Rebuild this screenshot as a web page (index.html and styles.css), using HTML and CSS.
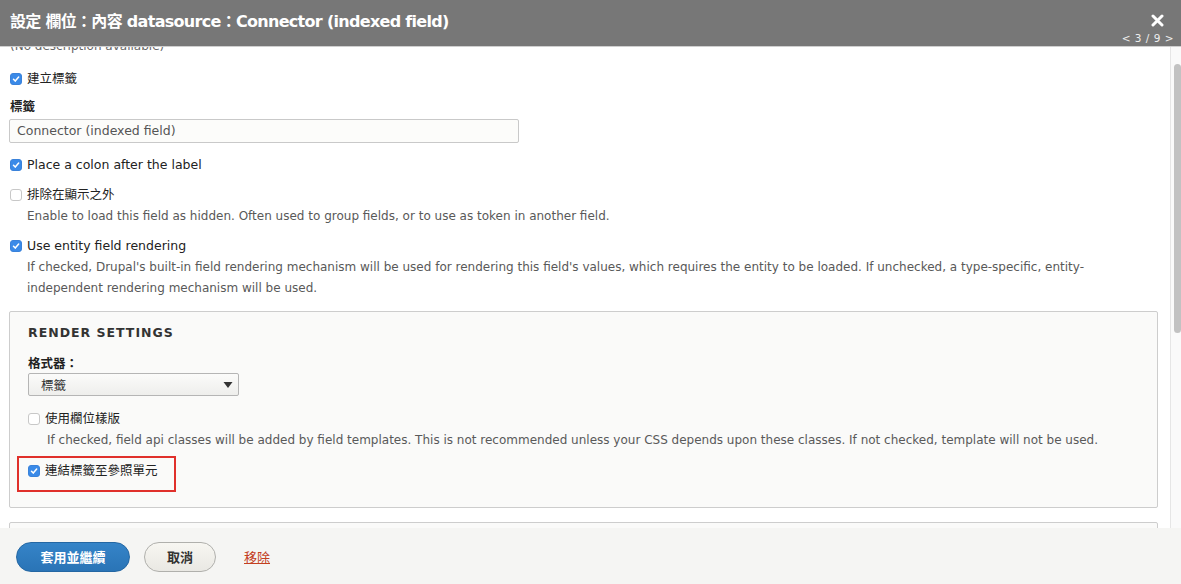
FILE: index.html
```html
<!DOCTYPE html>
<html lang="zh-Hant">
<head>
<meta charset="utf-8">
<title>設定 欄位</title>
<link rel="stylesheet" href="styles.css">
</head>
<body>
<div class="dialog">
  <header class="titlebar">
    <h1 class="title">設定 欄位：內容 datasource：Connector (indexed field)</h1>
    <div class="title-tools">
      <span class="close" aria-label="close">
        <svg width="13" height="13" viewBox="0 0 13 13"><path d="M2 2 L11 11 M11 2 L2 11" stroke="#fff" stroke-width="3" stroke-linecap="round"/></svg>
      </span>
      <span class="pager">&lt; 3 / 9 &gt;</span>
    </div>
  </header>

  <div class="body">
    <div class="scroll">
      <p class="nodesc">(No description available)</p>

      <div class="check check-first">
        <span class="cb on"><svg viewBox="0 0 12 12"><path d="M3 6.3 L5.1 8.5 L9.2 3.6" fill="none" stroke="#fff" stroke-width="1.8" stroke-linecap="round" stroke-linejoin="round"/></svg></span>
        <span class="cb-label">建立標籤</span>
      </div>

      <div class="field-label">標籤</div>
      <div class="text-input">Connector (indexed field)</div>

      <div class="check check-after-input">
        <span class="cb on"><svg viewBox="0 0 12 12"><path d="M3 6.3 L5.1 8.5 L9.2 3.6" fill="none" stroke="#fff" stroke-width="1.8" stroke-linecap="round" stroke-linejoin="round"/></svg></span>
        <span class="cb-label">Place a colon after the label</span>
      </div>

      <div class="check check-gap">
        <span class="cb"></span>
        <span class="cb-label">排除在顯示之外</span>
      </div>
      <p class="desc">Enable to load this field as hidden. Often used to group fields, or to use as token in another field.</p>

      <div class="check check-gap2">
        <span class="cb on"><svg viewBox="0 0 12 12"><path d="M3 6.3 L5.1 8.5 L9.2 3.6" fill="none" stroke="#fff" stroke-width="1.8" stroke-linecap="round" stroke-linejoin="round"/></svg></span>
        <span class="cb-label">Use entity field rendering</span>
      </div>
      <p class="desc">If checked, Drupal's built-in field rendering mechanism will be used for rendering this field's values, which requires the entity to be loaded. If unchecked, a type-specific, entity-independent rendering mechanism will be used.</p>

      <section class="fieldset">
        <h2 class="legend">RENDER SETTINGS</h2>
        <div class="field-label field-label-fs">格式器：</div>
        <div class="select">
          <span>標籤</span>
          <svg class="arrow" width="10" height="8" viewBox="0 0 10 8"><path d="M0.5 1 L9.5 1 L5 7 Z" fill="#333"/></svg>
        </div>

        <div class="check check-fs">
          <span class="cb"></span>
          <span class="cb-label">使用欄位樣版</span>
        </div>
        <p class="desc">If checked, field api classes will be added by field templates. This is not recommended unless your CSS depends upon these classes. If not checked, template will not be used.</p>

        <div class="check check-marked">
          <span class="cb on"><svg viewBox="0 0 12 12"><path d="M3 6.3 L5.1 8.5 L9.2 3.6" fill="none" stroke="#fff" stroke-width="1.8" stroke-linecap="round" stroke-linejoin="round"/></svg></span>
          <span class="cb-label">連結標籤至參照單元</span>
          <span class="highlight"></span>
        </div>
      </section>

      <section class="fieldset fieldset-next"></section>
    </div>
    <div class="scrollbar"><div class="thumb"></div></div>
  </div>

  <footer class="footer">
    <button class="btn btn-primary">套用並繼續</button>
    <button class="btn btn-default">取消</button>
    <a class="link-remove" href="#">移除</a>
  </footer>
</div>
</body>
</html>
```

FILE: styles.css
```css
* { box-sizing: border-box; }
html, body { margin: 0; padding: 0; }
body {
  font-family: "DejaVu Sans", "Noto Sans CJK TC", sans-serif;
  font-size: 13px;
  color: #333;
  background: #fff;
}
.dialog {
  width: 1181px;
  height: 584px;
  display: flex;
  flex-direction: column;
  overflow: hidden;
}
.titlebar {
  height: 47px;
  flex: none;
  background: #777;
  border-bottom: 1px solid #cfcfcf;
  display: flex;
  justify-content: space-between;
  align-items: flex-start;
  position: relative;
  z-index: 2;
}
.title {
  margin: 0;
  padding: 11px 0 0 10px;
  font-size: 16px;
  line-height: 22px;
  font-weight: bold;
  color: #fff;
  font-family: "DejaVu Sans", "Noto Sans CJK TC", sans-serif;
  letter-spacing: -0.7px;
}
.title-tools {
  display: flex;
  flex-direction: column;
  align-items: flex-end;
  padding: 14px 7px 0 0;
}
.close {
  display: block;
  width: 13px;
  height: 13px;
  margin-right: 10px;
}
.close svg { display: block; }
.pager {
  font-size: 10.5px;
  line-height: 13px;
  color: #eee;
  margin-top: 5px;
  letter-spacing: 0.5px;
}
.body {
  flex: 1;
  display: flex;
  min-height: 0;
  overflow: hidden;
}
.scroll {
  flex: 1;
  padding: 0 13px 0 9px;
  overflow: hidden;
}
.scrollbar {
  width: 11px;
  flex: none;
  background: #fafafa;
  border-left: 1px solid #e6e6e6;
  padding: 17px 1px 0 3px;
}
.thumb {
  width: 7px;
  height: 269px;
  background: #c2c2c2;
  border-radius: 4px;
}
p { margin: 0; }
.nodesc {
  margin-top: -11px;
  padding-left: 1px;
  line-height: 20px;
  font-size: 12px;
  color: #666;
}
.check {
  display: flex;
  align-items: center;
  height: 20px;
  padding-left: 1px;
  position: relative;
}
.check-first { margin-top: 13px; }
.check-after-input { margin-top: 12px; }
.check-gap { margin-top: 10px; }
.check-gap2 { margin-top: 9px; }
.cb {
  width: 12px;
  height: 12px;
  border-radius: 3px;
  border: 1px solid #c8c8c8;
  background: #fff;
  flex: none;
  margin-right: 5px;
  display: flex;
  align-items: center;
  justify-content: center;
}
.cb.on {
  background: #3a8ae8;
  border-color: #3a82da;
}
.cb svg { width: 12px; height: 12px; display: block; }
.cb-label {
  font-size: 12.5px;
  color: #222;
  line-height: 20px;
}
.field-label {
  margin-top: 8px;
  padding-left: 1px;
  font-weight: bold;
  font-size: 12.5px;
  line-height: 20px;
  color: #222;
}
.text-input {
  margin-top: 2px;
  width: 510px;
  height: 24px;
  border: 1px solid #c9c9c9;
  border-radius: 2px;
  background: #fcfcfa;
  padding: 0 7px;
  font-size: 12.5px;
  line-height: 22px;
  color: #555;
}
.desc {
  margin-top: 1px;
  padding-left: 18px;
  font-size: 12px;
  line-height: 21px;
  color: #595959;
}
.fieldset {
  margin-top: 12px;
  width: 1149px;
  height: 197px;
  border: 1px solid #cdcdcd;
  border-radius: 2px;
  background: #fafaf9;
  padding: 11px 18px 0 18px;
}
.legend {
  margin: 0;
  font-size: 12.5px;
  line-height: 20px;
  font-weight: bold;
  letter-spacing: 1px;
  color: #333;
}
.field-label-fs {
  margin-top: 11px;
  padding-left: 0;
}
.select {
  margin-top: -1px;
  width: 211px;
  height: 23px;
  border: 1px solid #b5b5b5;
  border-radius: 2px;
  background: linear-gradient(#fbfbfa, #eeeeec);
  display: flex;
  align-items: center;
  justify-content: space-between;
  padding: 0 5px 0 12px;
  font-size: 12.5px;
  color: #333;
}
.select .arrow { display: block; }
.check-fs { margin-top: 13px; padding-left: 0; }
.fieldset .desc { padding-left: 19px; }
.check-marked { margin-top: 10px; padding-left: 0; }
.highlight {
  position: absolute;
  left: -11px;
  top: -5px;
  width: 159px;
  height: 36px;
  border: 2px solid #e0302b;
}
.fieldset-next {
  margin-top: 14px;
  height: 40px;
}
.footer {
  height: 56px;
  flex: none;
  background: #f5f5f3;
  display: flex;
  align-items: center;
  padding: 1px 0 0 16px;
}
.btn {
  height: 30px;
  border-radius: 15px;
  font-family: "DejaVu Sans", "Noto Sans CJK TC", sans-serif;
  font-size: 13px;
  font-weight: bold;
  padding: 0;
  cursor: pointer;
}
.btn-primary {
  width: 114px;
  background: linear-gradient(#3584c8, #2a74b6);
  border: 1px solid #2467a3;
  color: #fff;
}
.btn-default {
  width: 72px;
  margin-left: 14px;
  background: linear-gradient(#f7f6f1, #e9e8e3);
  border: 1px solid #b0b0ac;
  color: #333;
}
.link-remove {
  margin-left: 28px;
  color: #c3401f;
  font-size: 13px;
  text-decoration: underline;
}
```
